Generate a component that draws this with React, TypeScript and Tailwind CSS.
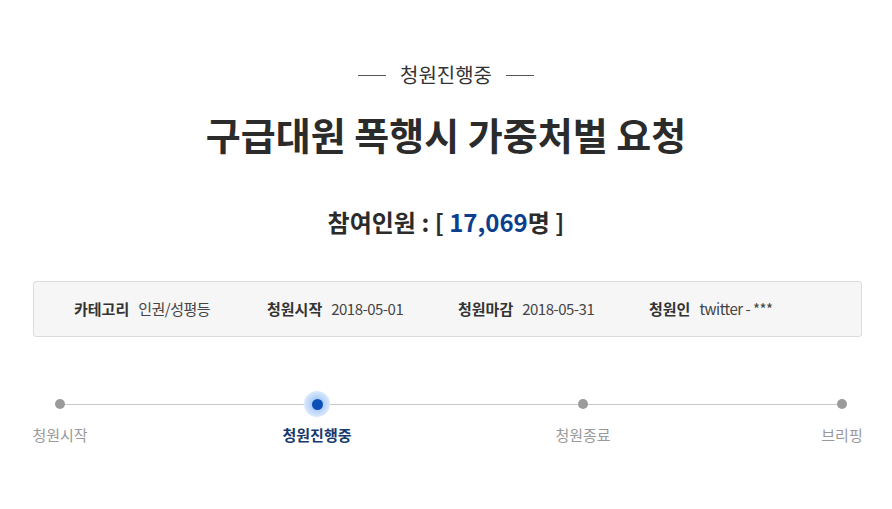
const font = { fontFamily: '"Noto Sans CJK KR", "Noto Sans", sans-serif' };

const info = [
  { label: '카테고리', value: '인권/성평등', w: 'w-[193px]' },
  { label: '청원시작', value: '2018-05-01', w: 'w-[191px]' },
  { label: '청원마감', value: '2018-05-31', w: 'w-[191px]' },
  { label: '청원인', value: 'twitter - ***', w: 'w-[160px]' },
];

function Dot() {
  return <div className="h-[10px] w-[10px] shrink-0 rounded-full bg-[#9b9b9b]" />;
}

function Line({ w }: { w: string }) {
  return <div className={`h-px shrink-0 bg-[#c9c9c9] ${w}`} />;
}

export default function App() {
  return (
    <div className="h-[509px] w-[892px] bg-white text-[#333]" style={font}>
      <div className="flex items-center justify-center gap-[14px] pt-[61px]">
        <div className="h-px w-[28px] bg-[#555]" />
        <span className="text-[20px] leading-[28px] text-[#333]">청원진행중</span>
        <div className="h-px w-[28px] bg-[#555]" />
      </div>

      <h1 className="mt-[22px] text-center text-[38px] font-bold leading-[46px] text-[#2b2b2b]">
        구급대원 폭행시 가중처벌 요청
      </h1>

      <div className="mt-[49px] text-center text-[24px] font-bold leading-[32px] text-[#2b2b2b]">
        참여인원 : [ <span className="text-[#0b3f8e]">17,069</span>명 ]
      </div>

      <div className="ml-[33px] mt-[43px] flex h-[56px] w-[829px] items-center rounded-[3px] border border-[#dcdcdc] bg-[#f6f6f6] pl-[40px]">
        {info.map((it) => (
          <div key={it.label} className={`flex items-center gap-[9px] text-[15px] leading-[20px] ${it.w}`}>
            <span className="font-bold text-[#333]">{it.label}</span>
            <span className="tracking-[-0.5px] text-[#444]">{it.value}</span>
          </div>
        ))}
      </div>

      <div className="ml-[55px] mt-[55px] flex h-[24px] items-center">
        <Dot />
        <Line w="w-[239px]" />
        <div className="flex h-[26px] w-[26px] shrink-0 items-center justify-center rounded-full bg-[radial-gradient(circle,#8fbaf3_0%,#c4dbfa_50%,#eaf3fe_85%,#ffffff_100%)]">
          <div className="h-[11px] w-[11px] rounded-full bg-[#0b4fb8]" />
        </div>
        <Line w="w-[248px]" />
        <Dot />
        <Line w="w-[249px]" />
        <Dot />
      </div>

      <div className="ml-[30px] mt-[9px] flex text-[15px] leading-[20px] text-[#999]">
        <span className="w-[60px] text-center">청원시작</span>
        <span className="ml-[189px] w-[76px] text-center font-bold text-[#173a6e]">청원진행중</span>
        <span className="ml-[197px] w-[62px] text-center">청원종료</span>
        <span className="ml-[206px] w-[44px] text-center">브리핑</span>
      </div>
    </div>
  );
}
